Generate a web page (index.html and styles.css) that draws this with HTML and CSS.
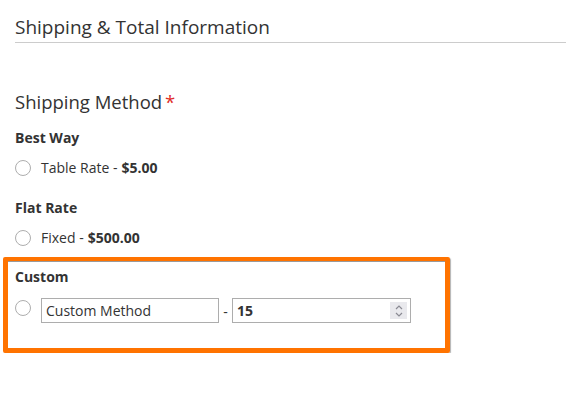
FILE: index.html
```html
<!DOCTYPE html>
<html lang="en">
	<head>
		<title>Shipping &amp; Total Information</title>
		<meta charset="utf-8">
		<link rel="stylesheet" href="styles.css">
	</head>

	<body>
		<div class="section">
			<div class="section-title">Shipping &amp; Total Information</div>

			<div class="field">
				<div class="field-label">Shipping Method<span class="req">*</span></div>

				<div class="carrier">
					<div class="carrier-title">Best Way</div>
					<label class="option"><span class="radio"></span>Table Rate - <b>$5.00</b></label>
				</div>

				<div class="carrier">
					<div class="carrier-title">Flat Rate</div>
					<label class="option"><span class="radio"></span>Fixed - <b>$500.00</b></label>
				</div>

				<div class="carrier custom">
					<div class="carrier-title">Custom</div>
					<div class="option custom-row">
						<span class="radio"></span>
						<input class="text-input" type="text" value="Custom Method">
						<span class="dash">-</span>
						<div class="num-input">
							<span class="num-value">15</span>
							<span class="spinner">
								<svg width="10" height="14" viewBox="0 0 10 14">
									<path d="M2 5 L5 2 L8 5" fill="none" stroke="#8a8a93" stroke-width="1.2"/>
									<path d="M2 9 L5 12 L8 9" fill="none" stroke="#8a8a93" stroke-width="1.2"/>
								</svg>
							</span>
						</div>
					</div>
				</div>
			</div>
		</div>
	</body>
</html>
```

FILE: styles.css
```css
body {
	margin: 0;
	padding: 0 0 0 15px;
	background: #fff;
	color: #333;
	font-family: "Open Sans", "Liberation Sans", sans-serif;
	font-size: 14px;
	overflow: hidden;
}

.section-title {
	font-size: 19px;
	line-height: 26px;
	padding-top: 14px;
	padding-bottom: 2px;
	border-bottom: 1px solid #cccccc;
}

.field {
	padding-top: 47px;
}

.field-label {
	font-size: 18.5px;
	line-height: 24px;
	margin-bottom: 14px;
}

.req {
	color: #e02b27;
	margin-left: 3px;
}

.carrier + .carrier {
	margin-top: 20px;
}

.carrier-title {
	font-weight: bold;
	line-height: 20px;
	margin-bottom: 10px;
}

.option {
	display: flex;
	align-items: center;
	line-height: 20px;
}

.option b {
	margin-left: 4px;
}

.radio {
	box-sizing: border-box;
	width: 16px;
	height: 16px;
	border: 1px solid #adadad;
	border-radius: 50%;
	margin-right: 10px;
	flex: none;
}

.carrier.custom {
	box-sizing: border-box;
	width: 447px;
	margin-left: -12px;
	margin-top: 9px;
	padding: 6px 7px 23px 7px;
	border: 5px solid #ff7300;
	border-top-width: 4px;
	border-radius: 2px;
	box-shadow: 1px 1px 1px rgba(0, 0, 0, 0.3), inset 0 1px 0 #9a9a9a;
}

.custom .carrier-title {
	margin-bottom: 11px;
}

.custom-row {
	align-items: flex-start;
}

.custom-row .radio {
	margin-top: 2px;
}

.text-input {
	box-sizing: border-box;
	width: 178px;
	height: 25px;
	margin: 0;
	padding: 0 4px;
	border: 1px solid #adadad;
	font-family: inherit;
	font-size: 14px;
	color: #333;
}

.dash {
	width: 13px;
	text-align: center;
	line-height: 27px;
}

.num-input {
	box-sizing: border-box;
	width: 179px;
	height: 25px;
	border: 1px solid #adadad;
	display: flex;
	align-items: center;
	justify-content: space-between;
	padding: 0 3px 0 4px;
}

.num-value {
	font-weight: bold;
}

.spinner {
	width: 17px;
	height: 17px;
	background: #e9e9ed;
	display: flex;
	align-items: center;
	justify-content: center;
}
```
